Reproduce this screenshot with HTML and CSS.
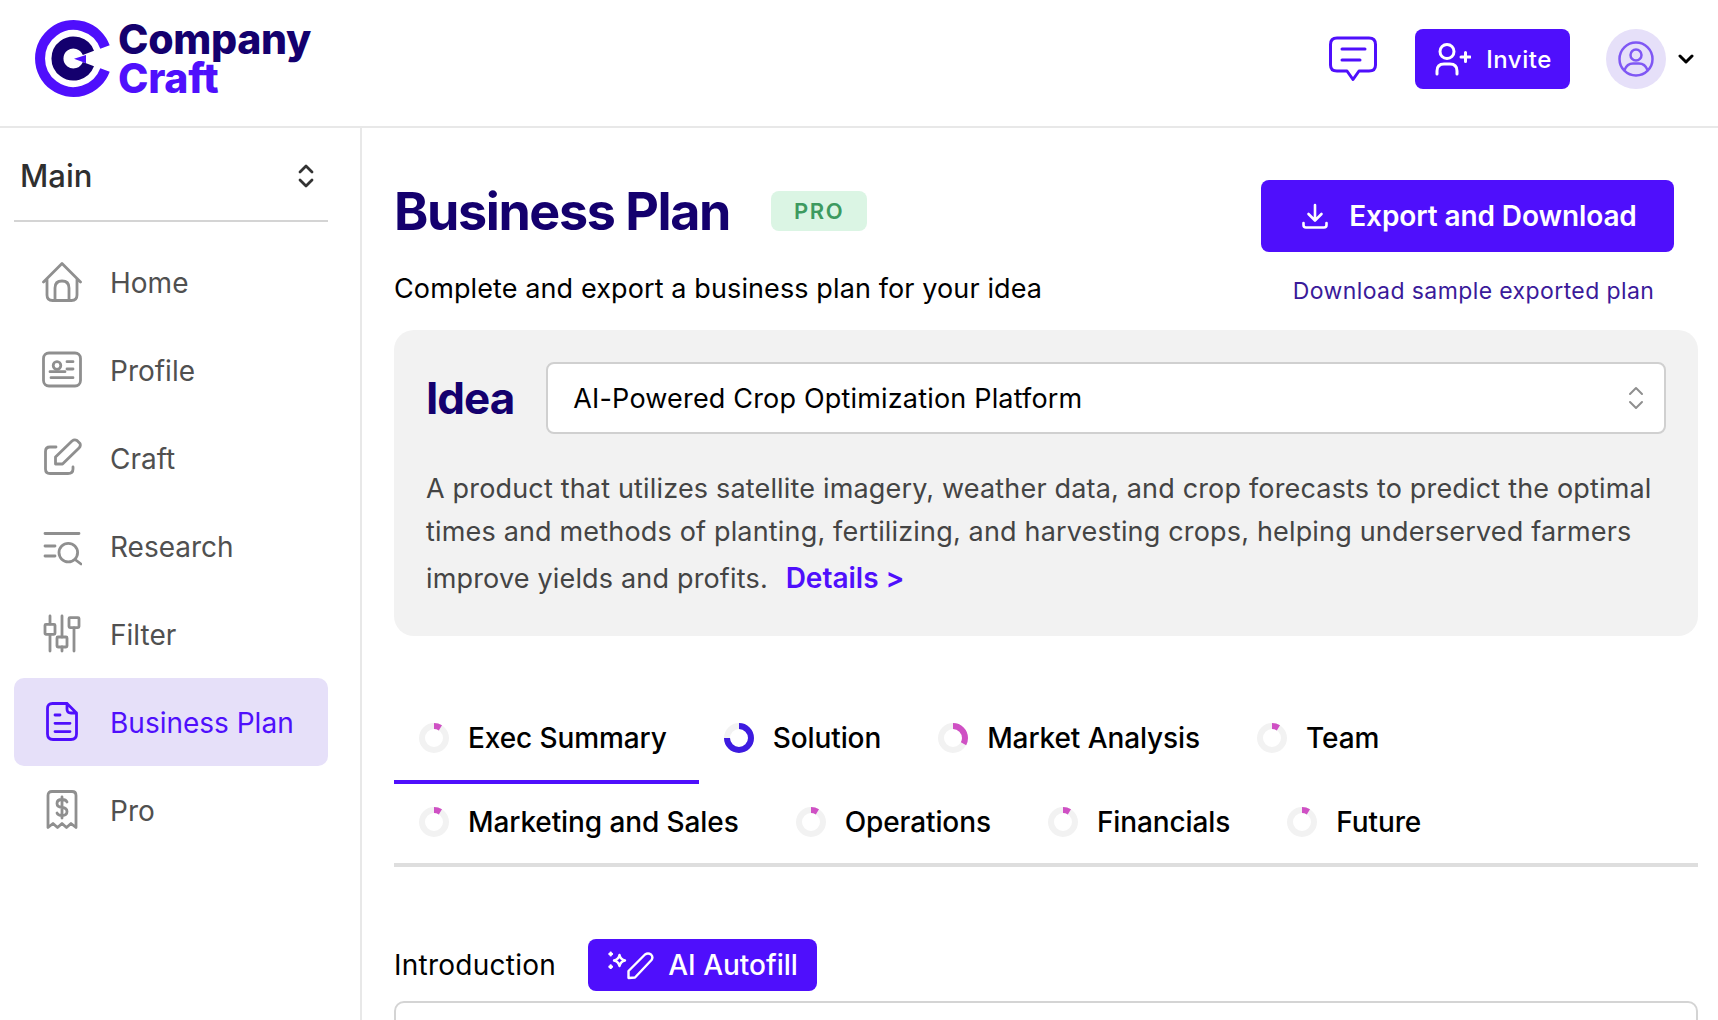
FILE: index.html
```html
<!DOCTYPE html>
<html lang="en">
<head>
<meta charset="utf-8">
<title>Business Plan</title>
<link rel="stylesheet" href="styles.css">
</head>
<body>
<header class="topbar">
  <div class="logo">
    <svg class="logo-mark" viewBox="0 0 76 79" fill="none">
      <path d="M70 28 A33.500 33.500 0 1 0 70 51" stroke="#4f0ffc" stroke-width="10"/>
      <path d="M53.400 33.800 A16 16 0 1 0 53.400 45.200" stroke="#14006e" stroke-width="12"/>
      <path d="M51 36 L39 39.700 L51 44.300 Z" fill="#4f0ffc"/>
    </svg>
    <div class="logo-text"><span class="logo-a">Company</span><span class="logo-b">Craft</span></div>
  </div>
  <div class="top-actions">
    <svg class="chat" viewBox="0 0 48 46" fill="none" stroke="#4f0ffc" stroke-width="3" stroke-linecap="round" stroke-linejoin="round">
      <path d="M8 2 H40 Q46.500 2 46.500 8.500 V29 Q46.500 35 40 35 H30 L24 43.500 L18 35 H8 Q1.500 35 1.500 29 V8.500 Q1.500 2 8 2 Z"/>
      <path d="M13 13 H36 M13 24 H31"/>
    </svg>
    <button class="btn invite">
      <svg class="invite-icon" viewBox="0 0 36 34" fill="none" stroke="#fff" stroke-width="3" stroke-linecap="round">
        <circle cx="12" cy="9.500" r="7"/>
        <path d="M2 32 V29 Q2 22 9 22 H15 Q22 22 22 29 V32 M26 15 H35 M30.500 10.500 V19.500"/>
      </svg>
      <span>Invite</span>
    </button>
    <div class="avatar">
      <svg viewBox="0 0 36 36" fill="none" stroke="#7f57f4" stroke-width="2.500">
        <circle cx="18" cy="18" r="16.500"/>
        <circle cx="18" cy="14" r="5.500"/>
        <path d="M6.500 29 Q9 22.500 15 22.500 H21 Q27 22.500 29.500 29"/>
      </svg>
    </div>
    <svg class="caret" viewBox="0 0 16 10" fill="none" stroke="#000" stroke-width="3" stroke-linecap="round" stroke-linejoin="round"><path d="M2 2 L8 8 L14 2"/></svg>
  </div>
</header>
<div class="shell">
  <aside class="sidebar">
    <div class="side-head">
      <span>Main</span>
      <svg viewBox="0 0 16 24" fill="none" stroke="#333" stroke-width="2.800" stroke-linecap="round" stroke-linejoin="round"><path d="M2 8 L8 2 L14 8 M2 16 L8 22 L14 16"/></svg>
    </div>
    <nav class="nav">
      <a class="nav-item">
        <svg viewBox="0 0 40 40"><path d="M1.500 20 L20 1.500 L38.500 20 M5 17 V33 Q5 38.500 10.500 38.500 H29.500 Q35 38.500 35 33 V17 M13 38.500 V26 Q13 19 20 19 Q27 19 27 26 V38.500"/></svg>
        <span>Home</span>
      </a>
      <a class="nav-item">
        <svg viewBox="0 0 40 40"><rect x="1.500" y="3" width="37" height="33" rx="5.500"/><circle cx="15" cy="15.500" r="3.800"/><path d="M8 21.700 H23 M9 27.700 H31 M25 11.700 H31 M25 19 H31"/></svg>
        <span>Profile</span>
      </a>
      <a class="nav-item">
        <svg viewBox="0 0 40 40"><path d="M14 9 H8 Q3.500 9 3.500 13.500 V31 Q3.500 35.500 8 35.500 H26 Q31 35.500 31 31 V29 M13.500 26 V19 L30 3 Q32.500 1 35 2.500 L38 5.500 Q39 8 37 10 L20.500 26 Z"/></svg>
        <span>Craft</span>
      </a>
      <a class="nav-item">
        <svg viewBox="0 0 40 40"><path d="M3 7.500 H37 M3 20 H13 M3 30 H13 M33 33.500 L39 38"/><circle cx="26.300" cy="26.600" r="9.300"/></svg>
        <span>Research</span>
      </a>
      <a class="nav-item">
        <svg viewBox="0 0 40 40"><path d="M8 2 V10 M8 20.500 V37 M20 2 V23 M20 33 V37 M32 14 V37"/><rect x="3" y="10.300" width="10" height="10" rx="1"/><rect x="15" y="23" width="10" height="10" rx="1"/><rect x="27" y="3.600" width="10" height="10" rx="1"/></svg>
        <span>Filter</span>
      </a>
      <a class="nav-item active">
        <svg viewBox="0 0 40 40"><path d="M10.500 1.500 H25 L34.500 11 V32 Q34.500 37.500 29 37.500 H11 Q5.500 37.500 5.500 32 V6.500 Q5.500 1.500 10.500 1.500 Z M25 1.500 V7 Q25 11 29 11 H34.500 M13 13 H18 M13 21.300 H28 M13 29.600 H28"/></svg>
        <span>Business Plan</span>
      </a>
      <a class="nav-item">
        <svg viewBox="0 0 40 40"><path d="M6 37.500 V5.500 Q6 1.500 10 1.500 H30 Q34 1.500 34 5.500 V37.500 L29 33.500 L24.500 37.500 L20 33.500 L15.500 37.500 L11 33.500 Z M25 12 Q24 9.500 20 9.500 Q15 9.500 15 13.500 Q15 17 20 17.500 Q25 18 25 21.500 Q25 25.500 20 25.500 Q16 25.500 15 23 M20 7 V28"/></svg>
        <span>Pro</span>
      </a>
    </nav>
  </aside>
  <main class="content">
    <section class="page-head">
      <div class="page-title">
        <div class="title-row">
          <h1>Business Plan</h1>
          <span class="badge">PRO</span>
        </div>
        <p class="subtitle">Complete and export a business plan for your idea</p>
      </div>
      <div class="page-actions">
        <button class="btn export">
          <svg viewBox="0 0 26 26" fill="none" stroke="#fff" stroke-width="2.600" stroke-linecap="round" stroke-linejoin="round"><path d="M13 2 V17 M6.500 11 L13 17.500 L19.500 11 M1.500 20 V22 Q1.500 24.500 4 24.500 H22 Q24.500 24.500 24.500 22 V20"/></svg>
          <span>Export and Download</span>
        </button>
        <a class="sample">Download sample exported plan</a>
      </div>
    </section>
    <section class="idea-card">
      <div class="idea-row">
        <h2>Idea</h2>
        <div class="select">
          <span>AI-Powered Crop Optimization Platform</span>
          <svg viewBox="0 0 16 24" fill="none" stroke="#8f8f8f" stroke-width="2" stroke-linecap="round" stroke-linejoin="round"><path d="M2 8 L8 2 L14 8 M2 16 L8 22 L14 16"/></svg>
        </div>
      </div>
      <p class="idea-text">A product that utilizes satellite imagery, weather data, and crop forecasts to predict the optimal times and methods of planting, fertilizing, and harvesting crops, helping underserved farmers improve yields and profits. <a class="details">Details &gt;</a></p>
    </section>
    <section class="tabs">
      <div class="tab-row">
        <a class="tab active">
          <svg class="ring" viewBox="0 0 30 30"><circle class="track" cx="15" cy="15" r="12"/><circle class="arc" cx="15" cy="15" r="12" pathLength="100" stroke-dasharray="9 100"/></svg>
          <span>Exec Summary</span>
        </a>
        <a class="tab">
          <svg class="ring" viewBox="0 0 30 30"><circle class="track" cx="15" cy="15" r="12"/><circle class="arc blue" cx="15" cy="15" r="12" pathLength="100" stroke-dasharray="75 100"/></svg>
          <span>Solution</span>
        </a>
        <a class="tab">
          <svg class="ring" viewBox="0 0 30 30"><circle class="track" cx="15" cy="15" r="12"/><circle class="arc" cx="15" cy="15" r="12" pathLength="100" stroke-dasharray="33 100"/></svg>
          <span>Market Analysis</span>
        </a>
        <a class="tab">
          <svg class="ring" viewBox="0 0 30 30"><circle class="track" cx="15" cy="15" r="12"/><circle class="arc" cx="15" cy="15" r="12" pathLength="100" stroke-dasharray="9 100"/></svg>
          <span>Team</span>
        </a>
      </div>
      <div class="tab-row second">
        <a class="tab">
          <svg class="ring" viewBox="0 0 30 30"><circle class="track" cx="15" cy="15" r="12"/><circle class="arc" cx="15" cy="15" r="12" pathLength="100" stroke-dasharray="9 100"/></svg>
          <span>Marketing and Sales</span>
        </a>
        <a class="tab">
          <svg class="ring" viewBox="0 0 30 30"><circle class="track" cx="15" cy="15" r="12"/><circle class="arc" cx="15" cy="15" r="12" pathLength="100" stroke-dasharray="9 100"/></svg>
          <span>Operations</span>
        </a>
        <a class="tab">
          <svg class="ring" viewBox="0 0 30 30"><circle class="track" cx="15" cy="15" r="12"/><circle class="arc" cx="15" cy="15" r="12" pathLength="100" stroke-dasharray="9 100"/></svg>
          <span>Financials</span>
        </a>
        <a class="tab">
          <svg class="ring" viewBox="0 0 30 30"><circle class="track" cx="15" cy="15" r="12"/><circle class="arc" cx="15" cy="15" r="12" pathLength="100" stroke-dasharray="9 100"/></svg>
          <span>Future</span>
        </a>
      </div>
    </section>
    <section class="field">
      <div class="field-head">
        <label>Introduction</label>
        <button class="btn autofill">
          <svg viewBox="0 0 48 30" fill="none" stroke="#fff" stroke-width="2.400" stroke-linecap="round" stroke-linejoin="round">
            <path d="M21.500 28 V21 L38 4.500 Q41 2.500 44 4.500 Q46.500 7 44.500 10 L28 27.500 Z"/>
            <path d="M12.500 5 Q13.500 9.500 18 10.500 Q13.500 11.500 12.500 16 Q11.500 11.500 7 10.500 Q11.500 9.500 12.500 5 Z"/>
            <path d="M3.700 2.800 V5.200 M2.500 4 H4.900 M3.700 15.500 V17.900 M2.500 16.700 H4.900"/>
          </svg>
          <span>AI Autofill</span>
        </button>
      </div>
      <div class="textbox"></div>
    </section>
  </main>
</div>
</body>
</html>
```

FILE: styles.css
```css
* { box-sizing: border-box; }

html, body {
  margin: 0;
  height: 1020px;
  overflow: hidden;
  background: #fff;
  font-family: Inter, "Liberation Sans", sans-serif;
  color: #000;
}

h1, h2, p { margin: 0; }

.btn {
  display: flex;
  align-items: center;
  justify-content: center;
  border: 0;
  padding: 0;
  background: #4f0ffc;
  color: #fff;
  font-family: inherit;
  border-radius: 8px;
}

.topbar {
  height: 128px;
  border-bottom: 2px solid #e8e8e8;
  display: flex;
  align-items: flex-start;
  justify-content: space-between;
  padding: 0 24px 0 35px;
}

.logo {
  display: flex;
  align-items: flex-start;
  gap: 7px;
  padding-top: 19px;
}

.logo-mark { width: 76px; height: 79px; }

.logo-text {
  display: flex;
  flex-direction: column;
  padding-top: 1px;
  font-size: 41px;
  line-height: 39px;
  font-weight: 800;
  letter-spacing: -0.3px;
}

.logo-a { color: #14006e; }
.logo-b { color: #4f0ffc; }

.top-actions {
  display: flex;
  align-items: center;
  padding-top: 29px;
}

.chat { width: 48px; height: 46px; margin-right: 38px; }

.invite {
  width: 155px;
  height: 60px;
  gap: 15px;
  padding-left: 2px;
  font-size: 24px;
  font-weight: 500;
  letter-spacing: 0.5px;
}

.invite-icon { width: 36px; height: 34px; }

.avatar {
  width: 60px;
  height: 60px;
  margin-left: 36px;
  border-radius: 50%;
  background: #e6e0f9;
  display: flex;
  align-items: center;
  justify-content: center;
}

.avatar svg { width: 36px; height: 36px; }

.caret { width: 16px; height: 10px; margin-left: 12px; }

.shell {
  display: flex;
  height: 892px;
}

.sidebar {
  width: 362px;
  border-right: 2px solid #e8e8e8;
  padding: 0 32px 0 14px;
  flex: none;
}

.side-head {
  height: 94px;
  border-bottom: 2px solid #d4d4d4;
  display: flex;
  align-items: center;
  justify-content: space-between;
  padding: 4px 14px 0 6px;
  font-size: 31px;
  font-weight: 500;
  color: #2f2f2f;
  margin-bottom: 16px;
}

.side-head span { margin-top: -2px; }
.side-head svg { width: 16px; height: 24px; }

.nav-item {
  height: 88px;
  display: flex;
  align-items: center;
  gap: 28px;
  padding-left: 28px;
  border-radius: 10px;
  font-size: 28px;
  color: #505050;
}

.nav-item span { padding-top: 2px; }

.nav-item svg {
  width: 40px;
  height: 40px;
  fill: none;
  stroke: #8f8f8f;
  stroke-width: 2.800;
  stroke-linecap: round;
  stroke-linejoin: round;
}

.nav-item.active {
  background: #e6e0f9;
  color: #4f0ffc;
}

.nav-item.active svg { stroke: #4f0ffc; }

.content {
  flex: 1;
  min-width: 0;
  padding: 52px 20px 0 32px;
}

.page-head {
  display: flex;
  justify-content: space-between;
  align-items: flex-start;
  padding-right: 24px;
}

.title-row {
  display: flex;
  align-items: center;
  gap: 41px;
  height: 64px;
}

h1 {
  font-size: 52px;
  line-height: 64px;
  font-weight: 700;
  letter-spacing: -1.4px;
  color: #14006e;
}

.badge {
  width: 96px;
  height: 40px;
  border-radius: 8px;
  background: #dbf5e4;
  color: #3d9a5f;
  font-size: 22px;
  font-weight: 600;
  letter-spacing: 1.6px;
  display: flex;
  align-items: center;
  justify-content: center;
  margin-bottom: 3px;
}

.subtitle {
  margin-top: 27px;
  font-size: 27px;
  line-height: 36px;
  letter-spacing: 0.11px;
}

.page-actions {
  display: flex;
  flex-direction: column;
  align-items: center;
}

.export {
  width: 413px;
  height: 72px;
  gap: 21px;
  padding-left: 4px;
  font-size: 28px;
  font-weight: 600;
  letter-spacing: -0.1px;
}

.export svg { width: 26px; height: 26px; }

.sample {
  margin-top: 23px;
  margin-left: 12px;
  font-size: 23px;
  line-height: 32px;
  letter-spacing: 0.4px;
  color: #3a1a9a;
}

.idea-card {
  margin-top: 23px;
  height: 306px;
  background: #f2f2f2;
  border-radius: 20px;
  padding: 32px 32px 0;
}

.idea-row {
  display: flex;
  align-items: center;
  gap: 32px;
}

h2 {
  font-size: 44px;
  font-weight: 700;
  letter-spacing: -1px;
  color: #14006e;
}

.select {
  flex: 1;
  height: 72px;
  background: #fff;
  border: 2px solid #d0d0d0;
  border-radius: 8px;
  display: flex;
  align-items: center;
  justify-content: space-between;
  padding: 0 20px 0 25px;
  font-size: 27px;
  letter-spacing: 0.18px;
}

.select svg { width: 16px; height: 24px; }

.idea-text {
  margin-top: 33px;
  font-size: 27px;
  line-height: 43px;
  letter-spacing: 0.17px;
  color: #444;
}

.details {
  display: inline-block;
  margin-left: 10px;
  font-size: 28px;
  line-height: 51px;
  letter-spacing: 0;
  font-weight: 600;
  color: #4f0ffc;
}

.tabs {
  margin-top: 60px;
  border-bottom: 4px solid #dedede;
}

.tab-row { display: flex; }

.tab {
  display: flex;
  align-items: center;
  gap: 19px;
  padding: 24px 32px 24px 25px;
  border-bottom: 4px solid transparent;
  font-size: 28px;
  line-height: 36px;
  font-weight: 450;
  letter-spacing: -0.1px;
}

.tab.active { border-bottom-color: #4f0ffc; }

.second .tab {
  padding-top: 20px;
  padding-bottom: 23px;
  border-bottom: 0;
}

.ring { width: 30px; height: 30px; transform: rotate(-90deg); }

.ring circle { fill: none; stroke-width: 6; }
.track { stroke: #f2f2f2; }
.arc { stroke: #cf50c4; }
.arc.blue { stroke: #3d1be0; }

.field { margin-top: 72px; }

.field-head {
  display: flex;
  align-items: center;
  gap: 32px;
  font-size: 28px;
  letter-spacing: 0.25px;
}

.autofill {
  width: 229px;
  height: 52px;
  gap: 13px;
  font-size: 28px;
  font-weight: 500;
}

.autofill svg { width: 48px; height: 30px; }

.textbox {
  margin-top: 10px;
  height: 120px;
  border: 2px solid #d4d4d4;
  border-radius: 10px;
}
```
